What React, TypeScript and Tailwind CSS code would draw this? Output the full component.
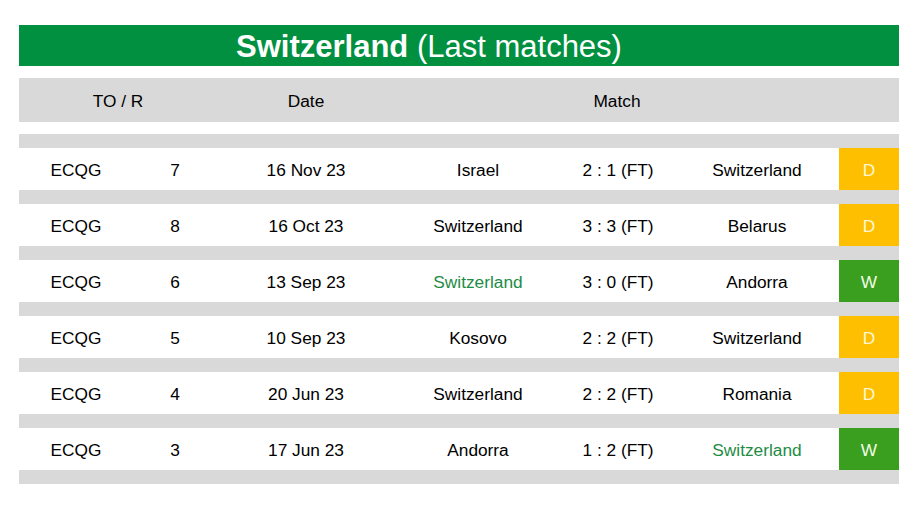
const MATCHES = [
  { comp: "ECQG", round: "7", date: "16 Nov 23", home: "Israel", score: "2 : 1 (FT)", away: "Switzerland", res: "D" },
  { comp: "ECQG", round: "8", date: "16 Oct 23", home: "Switzerland", score: "3 : 3 (FT)", away: "Belarus", res: "D" },
  { comp: "ECQG", round: "6", date: "13 Sep 23", home: "Switzerland", score: "3 : 0 (FT)", away: "Andorra", res: "W" },
  { comp: "ECQG", round: "5", date: "10 Sep 23", home: "Kosovo", score: "2 : 2 (FT)", away: "Switzerland", res: "D" },
  { comp: "ECQG", round: "4", date: "20 Jun 23", home: "Switzerland", score: "2 : 2 (FT)", away: "Romania", res: "D" },
  { comp: "ECQG", round: "3", date: "17 Jun 23", home: "Andorra", score: "1 : 2 (FT)", away: "Switzerland", res: "W" },
];

const COLS = "grid grid-cols-[114px_84px_178px_166px_114px_164px_60px]";

// winner is shown in green
function teamClass(team: string, res: string) {
  return team === "Switzerland" && res === "W" ? "text-[#1e8c45]" : "text-black";
}

export default function App() {
  return (
    <div className="w-[918px] h-[509px] bg-white pt-[25px] pl-[19px] font-['Liberation_Sans',Arial,sans-serif]">
      <div className="w-[880px]">
        {/* Title */}
        <div className={`${COLS} h-[41px] bg-[#00903f] text-white`}>
          <div className="col-span-6 flex items-center justify-center pt-[2px] text-[31px] leading-none">
            <span className="font-bold">Switzerland</span>&nbsp;(Last matches)
          </div>
        </div>

        {/* Header */}
        <div className={`${COLS} h-[44px] mt-[12px] bg-[#d9d9d9] text-[17.3px] text-black`}>
          <div className="col-span-2 flex items-center justify-center pt-[3px]">TO / R</div>
          <div className="flex items-center justify-center pt-[3px]">Date</div>
          <div className="col-span-3 flex items-center justify-center pt-[3px]">Match</div>
          <div />
        </div>

        <div className="h-[14px] mt-[12px] bg-[#d9d9d9]" />

        {MATCHES.map((m, i) => (
          <div key={i}>
            <div className={`${COLS} h-[42px] text-[17.3px] text-black [&>div]:pt-[3px]`}>
              <div className="flex items-center justify-center">{m.comp}</div>
              <div className="flex items-center justify-center">{m.round}</div>
              <div className="flex items-center justify-center">{m.date}</div>
              <div className={`flex items-center justify-center ${teamClass(m.home, m.res)}`}>{m.home}</div>
              <div className="flex items-center justify-center">{m.score}</div>
              <div className={`flex items-center justify-center ${teamClass(m.away, m.res)}`}>{m.away}</div>
              <div
                className={`flex items-center justify-center ${
                  m.res === "W" ? "bg-[#3a9e1e] text-[#f4fbe8]" : "bg-[#fdbf00] text-[#fff6d8]"
                }`}
              >
                {m.res}
              </div>
            </div>
            <div className="h-[14px] bg-[#d9d9d9]" />
          </div>
        ))}
      </div>
    </div>
  );
}
